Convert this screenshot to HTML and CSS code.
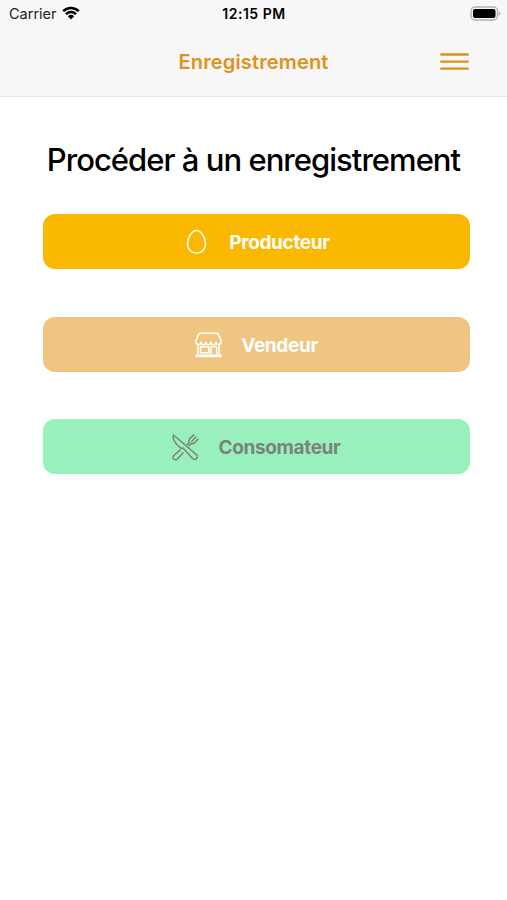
FILE: index.html
```html
<!DOCTYPE html>
<html lang="fr">
<head>
  <meta charset="UTF-8">
  <title>Enregistrement</title>
  <meta name="viewport" content="width=device-width, initial-scale=1.0">
  <link rel="stylesheet" href="styles.css">
</head>
<body>
  <header class="header">
    <div class="status-bar">
      <div class="carrier">
        <span>Carrier</span>
        <svg class="wifi" viewBox="0 0 18 14">
          <path d="M1.2 5.2a11.2 11.2 0 0 1 15.6 0M3.9 8.1a7.4 7.4 0 0 1 10.2 0" fill="none" stroke="#000" stroke-width="2.5"/>
          <path d="M5.9 10.3a4.5 4.5 0 0 1 6.2 0L9 13.6z"/>
        </svg>
      </div>
      <div class="time">12:15 PM</div>
      <svg class="battery" viewBox="0 0 31 15">
        <rect x="1" y="1" width="26.5" height="13" rx="4" fill="#f7f7f7" stroke="#b3b3b3" stroke-width="1.4"/>
        <rect x="3" y="3" width="22.5" height="9" rx="2"/>
        <path d="M28.7 5.2v4.6q1.8-.8 1.8-2.3t-1.8-2.3z" fill="#b3b3b3"/>
      </svg>
    </div>

    <nav class="navbar">
      <div class="nav-title">Enregistrement</div>
      <svg class="menu" viewBox="0 0 29 18">
        <path d="M1.2 1.5h26.6M1.2 8.6h26.6M1.2 15.700h26.6"/>
      </svg>
    </nav>
  </header>

  <main>
    <h1>Procéder à un enregistrement</h1>

    <div class="buttons">
      <button class="btn producteur">
        <svg class="icon" viewBox="0 0 27 27">
          <path d="M13.5 1.5c4.8 0 9 7.4 9 13.2 0 5.400-3.600 9.400-9 9.400s-9-4-9-9.400c0-5.800 4.200-13.200 9-13.200z"/>
        </svg>
        <span>Producteur</span>
      </button>

      <button class="btn vendeur">
        <svg class="icon" viewBox="0 0 27 27">
          <path d="M5.2 1.2h16.600q.8 0 1.200.7l3 6.500v1.600a2.500 2.500 0 0 1-5 .2a2.500 2.500 0 0 1-5 0a2.500 2.500 0 0 1-5 0a2.500 2.500 0 0 1-5 0a2.500 2.500 0 0 1-5-.2V8.400l3-6.500q.4-.7 1.200-.7z"/>
          <path d="M3 12.4v10.800M24 12.4v10.800M1 23.2h25v1.300H1zM5.5 14.8h8.200v6H5.5zM16 23v-7q0-1.500 1.500-1.500h2.600q1.500 0 1.500 1.500v7"/>
        </svg>
        <span>Vendeur</span>
      </button>

      <button class="btn consomateur">
        <svg class="icon" viewBox="0 0 27 27">
          <path d="M1.5 1C.3 4.500 2.500 8.200 5.500 11.200l3.800 3.300 1.700-.4 9.600 10.400a2.600 2.600 0 0 0 3.900-3.700z"/>
          <path d="M8.300 15.900l-6.500 5.600a2.500 2.500 0 0 0 3.400 3.700l5.900-6.400M15.300 10.300l1.900-2.100c-.7-2.200.2-3.300 1.300-4.300l3.300-3M26 5.300l-3.200 3.200c-1.300 1.300-2.600 1.600-4.200 1.100l-1.600 2.200M19.700 7.400l4.200-4.400"/>
        </svg>
        <span>Consomateur</span>
      </button>
    </div>
  </main>
</body>
</html>
```
FILE: styles.css
```css
* {
  box-sizing: border-box;
}

body {
  margin: 0;
  background-color: #fff;
  font-family: Inter, "Liberation Sans", sans-serif;
  color: #000;
}

.header {
  height: 97px;
  background-color: #f7f7f7;
  border-bottom: 1px solid #e6e6e6;
}

.status-bar {
  display: grid;
  grid-template-columns: 1fr auto 1fr;
  align-items: center;
  height: 27px;
  padding: 0 6px 0 9px;
  font-size: 14.5px;
}

.carrier {
  display: flex;
  align-items: center;
  gap: 5px;
  color: #222;
}

.wifi {
  width: 18px;
  height: 14px;
  margin-top: -2px;
}

.time {
  margin-right: 2px;
  font-size: 14px;
  font-weight: 600;
  letter-spacing: 0.5px;
}

.battery {
  width: 31px;
  height: 15px;
  justify-self: end;
}

.navbar {
  display: grid;
  grid-template-columns: 1fr auto 1fr;
  align-items: center;
  height: 69px;
  padding: 0 38px;
}

.nav-title {
  grid-column: 2;
  font-size: 20px;
  font-weight: 600;
  letter-spacing: 0.15px;
  color: #e09119;
}

.menu {
  width: 29px;
  height: 18px;
  justify-self: end;
  fill: none;
  stroke: #e09119;
  stroke-width: 2.3;
  stroke-linecap: round;
}

h1 {
  margin: 43px 0 35px;
  font-size: 31px;
  font-weight: 500;
  line-height: 39px;
  letter-spacing: -0.97px;
  text-align: center;
  white-space: nowrap;
}

.buttons {
  display: flex;
  flex-direction: column;
  gap: 47.7px;
  margin: 0 37px 0 42.5px;
}

.btn {
  display: flex;
  align-items: center;
  justify-content: center;
  gap: 19.5px;
  height: 55px;
  padding: 2px 0 0;
  border: none;
  border-radius: 12px;
  font-family: inherit;
  font-size: 19px;
  font-weight: 700;
  letter-spacing: -0.35px;
  color: #fff;
}

.producteur {
  background-color: #fab900;
}

.vendeur {
  background-color: #f0c581;
}

.consomateur {
  background-color: #98f0bd;
  color: #7b8379;
}

.icon {
  width: 27px;
  height: 27px;
  fill: none;
  stroke: currentColor;
  stroke-width: 1.5;
  stroke-linecap: round;
  stroke-linejoin: round;
}
```
